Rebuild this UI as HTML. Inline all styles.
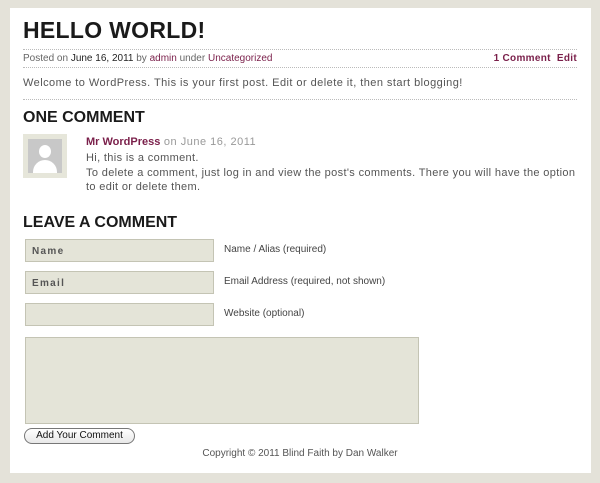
<!DOCTYPE html>
<html><head><meta charset="utf-8"><style>
*{margin:0;padding:0;box-sizing:border-box}
body{width:600px;height:483px;background:#e4e2d9;position:relative;overflow:hidden;font-family:"Liberation Sans",Helvetica,sans-serif;color:#555}
.p{position:absolute;left:10px;top:8px;width:581px;height:465px;background:#fff}
.a{position:absolute;white-space:nowrap}
.dot{position:absolute;left:23px;width:554px;border-top:1px dotted #bbb}
.m{color:#7a1f4a}
.in{position:absolute;left:25px;width:189px;height:23px;background:#e4e4d8;border:1px solid #c4c4b4;font-size:10px;font-weight:bold;letter-spacing:1.3px;color:#555;padding:6px 0 0 6px}
.lb{position:absolute;left:224px;font-size:10px;color:#444}
</style></head><body>
<div class="p"></div>
<div class="a" style="left:23px;top:17px;font-size:23px;font-weight:bold;color:#1a1a1a;letter-spacing:0.3px">HELLO WORLD!</div>
<div class="dot" style="top:49px"></div>
<div class="a" style="left:23px;top:53px;font-size:10px;color:#666">Posted on <span style="color:#222">June 16, 2011</span> by <span class="m">admin</span> under <span class="m">Uncategorized</span></div>
<div class="a m" style="right:23px;top:53px;font-size:10px;font-weight:bold;letter-spacing:0.3px">1 Comment&nbsp; Edit</div>
<div class="dot" style="top:67px"></div>
<div class="a" style="left:23px;top:77px;font-size:11px;letter-spacing:0.45px;color:#555">Welcome to WordPress. This is your first post. Edit or delete it, then start blogging!</div>
<div class="dot" style="top:99px"></div>
<div class="a" style="left:23px;top:109px;font-size:16px;font-weight:bold;color:#1a1a1a">ONE COMMENT</div>
<div class="a" style="left:23px;top:134px;width:44px;height:44px;background:#e6e6da;padding:5px"><div style="width:34px;height:34px;background:#c8c8c8;position:relative;overflow:hidden"><div style="position:absolute;left:11px;top:6px;width:12px;height:13px;border-radius:50%;background:#fff"></div><div style="position:absolute;left:5px;top:21px;width:24px;height:20px;border-radius:12px 12px 0 0;background:#fff"></div></div></div>
<div class="a" style="left:86px;top:136px;font-size:11px;letter-spacing:0.5px;color:#999"><b class="m" style="letter-spacing:0">Mr WordPress</b> on June 16, 2011</div>
<div class="a" style="left:86px;top:151px;font-size:11px;letter-spacing:0.35px;line-height:14.5px;color:#555">Hi, this is a comment.<br>To delete a comment, just log in and view the post's comments. There you will have the option<br>to edit or delete them.</div>
<div class="a" style="left:23px;top:214px;font-size:16px;font-weight:bold;color:#1a1a1a">LEAVE A COMMENT</div>
<div class="in" style="top:239px">Name</div><div class="lb" style="top:244px">Name / Alias (required)</div>
<div class="in" style="top:271px">Email</div><div class="lb" style="top:276px">Email Address (required, not shown)</div>
<div class="in" style="top:303px"></div><div class="lb" style="top:308px">Website (optional)</div>
<div class="a" style="left:25px;top:337px;width:394px;height:87px;background:#e4e4d8;border:1px solid #c4c4b4"></div>
<div class="a" style="left:24px;top:428px;width:111px;height:16px;border:1px solid #777;border-radius:8px;background:linear-gradient(#fff,#e8e8e8);font-size:10px;color:#111;text-align:center;line-height:14px">Add Your Comment</div>
<div class="a" style="left:0;width:600px;text-align:center;top:448px;font-size:10px;color:#555">Copyright © 2011 Blind Faith by Dan Walker</div>
</body></html>
